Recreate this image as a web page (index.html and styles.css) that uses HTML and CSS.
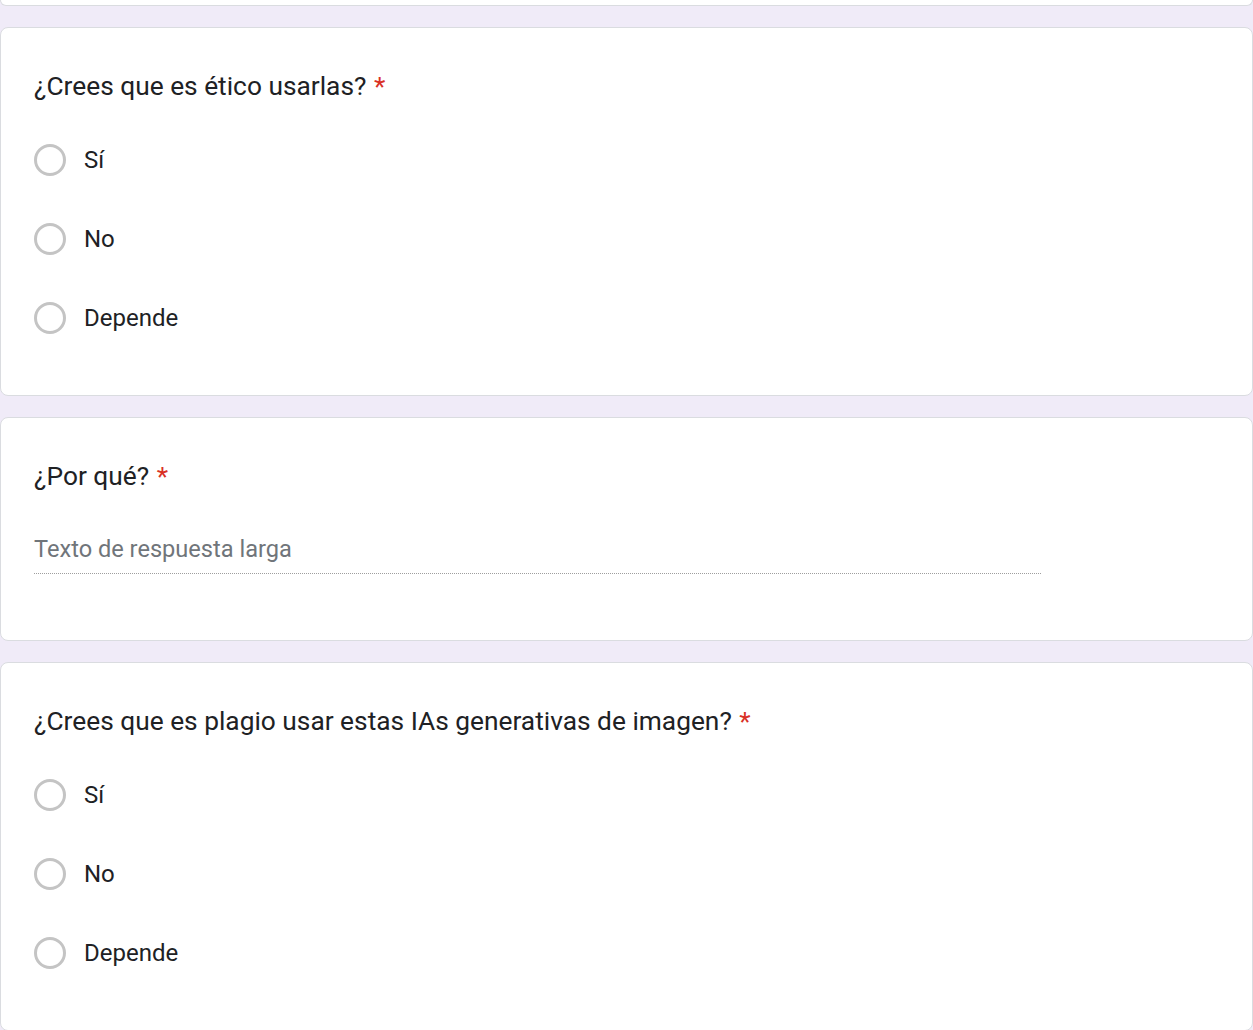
FILE: index.html
```html
<!DOCTYPE html>
<html lang="es">
<head>
<meta charset="utf-8">
<title>Formulario</title>
<link rel="stylesheet" href="styles.css">
</head>
<body>
<div class="page">
  <div class="card card-tail"></div>

  <div class="card">
    <div class="title">¿Crees que es ético usarlas? <span class="req">*</span></div>
    <div class="options">
      <div class="option"><span class="radio"></span><span class="label">Sí</span></div>
      <div class="option"><span class="radio"></span><span class="label">No</span></div>
      <div class="option"><span class="radio"></span><span class="label">Depende</span></div>
    </div>
  </div>

  <div class="card card-text">
    <div class="title">¿Por qué? <span class="req">*</span></div>
    <div class="answer">Texto de respuesta larga</div>
  </div>

  <div class="card">
    <div class="title">¿Crees que es plagio usar estas IAs generativas de imagen? <span class="req">*</span></div>
    <div class="options">
      <div class="option"><span class="radio"></span><span class="label">Sí</span></div>
      <div class="option"><span class="radio"></span><span class="label">No</span></div>
      <div class="option"><span class="radio"></span><span class="label">Depende</span></div>
    </div>
  </div>
</div>
</body>
</html>
```

FILE: styles.css
```css
html, body {
  margin: 0;
  padding: 0;
  background: #f0ebf8;
  font-family: Roboto, "Liberation Sans", Arial, sans-serif;
  color: #202124;
}

.page {
  display: flex;
  flex-direction: column;
  gap: 21px;
  height: 1030px;
  overflow: hidden;
}

.card {
  background: #fff;
  border: 1px solid #dadce0;
  border-radius: 8px;
  padding: 40px 33px 38px;
  flex: none;
}

.card-tail {
  height: 6px;
  padding: 0;
  border-top: none;
  border-radius: 0 0 8px 8px;
  box-sizing: border-box;
}

.title {
  font-size: 26.3px;
  line-height: 36px;
}

.req {
  color: #d93025;
  margin-left: 1px;
}

.options {
  margin-top: 16px;
  display: flex;
  flex-direction: column;
}

.option {
  height: 79px;
  display: flex;
  align-items: center;
  gap: 18px;
}

.radio {
  width: 32px;
  height: 32px;
  box-sizing: border-box;
  border: 3px solid #c4c4c4;
  border-radius: 50%;
  flex: none;
}

.label {
  font-size: 24px;
  line-height: 32px;
}

.card-text {
  padding-bottom: 66px;
}

.answer {
  margin-top: 39px;
  width: 1007px;
  font-size: 23.6px;
  line-height: 32px;
  color: #70757a;
  padding-bottom: 8px;
  border-bottom: 1px dotted rgba(0, 0, 0, 0.38);
}
```
